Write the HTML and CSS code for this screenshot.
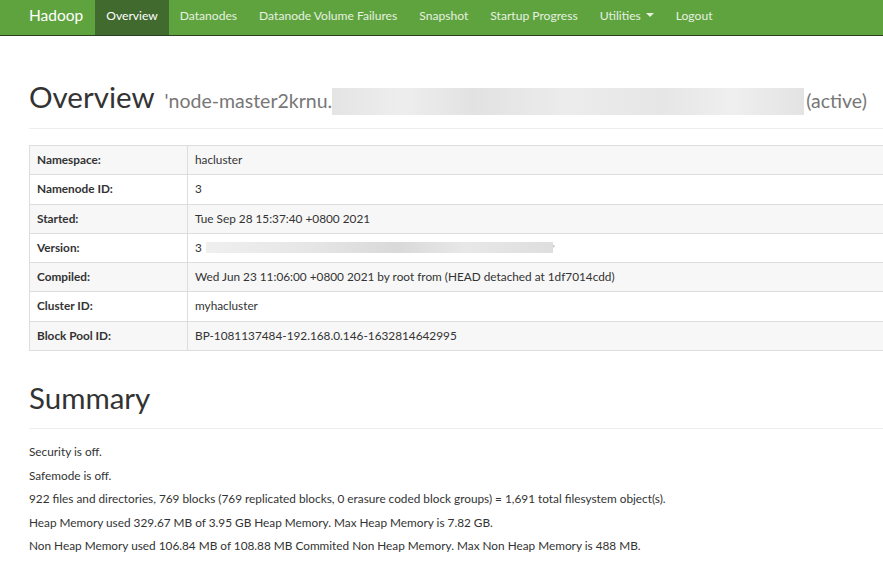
FILE: index.html
```html
<!DOCTYPE html>
<html>
<head>
<meta charset="utf-8">
<title>Namenode information</title>
<link rel="stylesheet" href="styles.css">
</head>
<body>
<header class="navbar">
  <a class="brand" href="#">Hadoop</a>
  <ul class="nav">
    <li class="active"><a href="#">Overview</a></li>
    <li><a href="#">Datanodes</a></li>
    <li><a href="#">Datanode Volume Failures</a></li>
    <li><a href="#">Snapshot</a></li>
    <li><a href="#">Startup Progress</a></li>
    <li><a href="#">Utilities <span class="caret"></span></a></li>
    <li><a href="#">Logout</a></li>
  </ul>
</header>
<main class="container">
  <div class="page-header">
    <h1>Overview <small>'node-master2krnu.<span class="redact redact-host"></span>(active)</small></h1>
  </div>
  <table class="table">
    <tbody>
      <tr><th>Namespace:</th><td>hacluster</td></tr>
      <tr><th>Namenode ID:</th><td>3</td></tr>
      <tr><th>Started:</th><td>Tue Sep 28 15:37:40 +0800 2021</td></tr>
      <tr><th>Version:</th><td>3<span class="redact redact-version"></span><span class="tick">'</span></td></tr>
      <tr><th>Compiled:</th><td>Wed Jun 23 11:06:00 +0800 2021 by root from (HEAD detached at 1df7014cdd)</td></tr>
      <tr><th>Cluster ID:</th><td>myhacluster</td></tr>
      <tr><th>Block Pool ID:</th><td>BP-1081137484-192.168.0.146-1632814642995</td></tr>
    </tbody>
  </table>
  <div class="page-header summary-header">
    <h1>Summary</h1>
  </div>
  <p>Security is off.</p>
  <p>Safemode is off.</p>
  <p>922 files and directories, 769 blocks (769 replicated blocks, 0 erasure coded block groups) = 1,691 total filesystem object(s).</p>
  <p>Heap Memory used 329.67 MB of 3.95 GB Heap Memory. Max Heap Memory is 7.82 GB.</p>
  <p>Non Heap Memory used 106.84 MB of 108.88 MB Commited Non Heap Memory. Max Non Heap Memory is 488 MB.</p>
</main>
</body>
</html>
```
FILE: styles.css
```css
html, body {
  margin: 0;
  padding: 0;
  overflow: hidden;
  background: #fff;
}
body {
  font-family: Lato, "Open Sans", sans-serif;
  font-size: 11.8px;
  line-height: 17px;
  color: #333;
}
.navbar {
  display: flex;
  align-items: stretch;
  height: 35px;
  background: #5fa33e;
  border-bottom: 1px solid #2a3f20;
  padding-left: 29px;
}
.brand {
  font-size: 15.5px;
  color: #fff;
  text-decoration: none;
  display: flex;
  align-items: center;
  padding-bottom: 5px;
  margin-right: 12px;
}
.nav {
  list-style: none;
  margin: 0;
  padding: 0;
  display: flex;
}
.nav li a {
  display: flex;
  align-items: center;
  box-sizing: border-box;
  height: 100%;
  padding: 0 11px 5px;
  color: #e6f1e0;
  text-decoration: none;
  font-size: 12.1px;
}
.nav li.active a {
  background: #416a2f;
  color: #fff;
}
.caret {
  display: inline-block;
  width: 0;
  height: 0;
  margin-left: 5px;
  border-top: 4px solid #e6f1e0;
  border-left: 4px solid transparent;
  border-right: 4px solid transparent;
  vertical-align: middle;
}
.container {
  padding-left: 29px;
  width: 1140px;
}
.page-header {
  margin: 42px 0 16px;
  padding-bottom: 8px;
  border-bottom: 1px solid #eee;
}
.page-header h1 {
  margin: 0;
  font-size: 29.5px;
  font-weight: 400;
  line-height: 38px;
  color: #333;
  display: flex;
  align-items: baseline;
  white-space: nowrap;
}
.page-header h1 small {
  font-size: 19.5px;
  color: #777;
  margin-left: 10px;
  display: inline-flex;
  align-items: center;
}
.redact {
  display: inline-block;
  background: linear-gradient(90deg, #e4e4e4 0%, #eeeeee 15%, #e2e2e2 30%, #ececec 50%, #e6e6e6 70%, #efefef 85%, #e3e3e3 100%);
}
.redact-host {
  width: 472px;
  height: 27px;
  margin-right: 2px;
}
.redact-version {
  width: 347px;
  height: 11px;
  margin-left: 4px;
  vertical-align: -1px;
  background: linear-gradient(90deg, #efefef 0%, #e6e6e6 30%, #d9d9d9 55%, #e8e8e8 75%, #dedede 100%);
}
.tick {
  color: #999;
  font-size: 10px;
}
.table {
  width: 100%;
  border-collapse: collapse;
  border: 1px solid #ddd;
  margin-bottom: 20px;
}
.table th, .table td {
  border: 1px solid #ddd;
  padding: 6px 7px;
  line-height: 16.3px;
  text-align: left;
}
.table th {
  width: 143px;
  font-weight: 700;
}
.table tr:nth-child(odd) {
  background: #f7f7f7;
}
.summary-header {
  margin-top: 28px;
  padding-bottom: 11px;
  margin-bottom: 14px;
}
p {
  margin: 0 0 6.5px;
}
```
